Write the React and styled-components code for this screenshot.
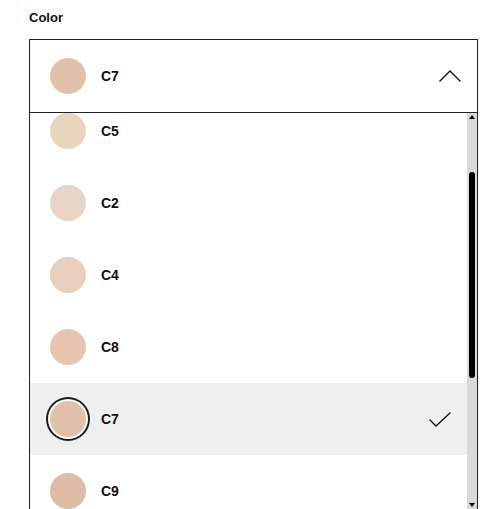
import React from "react";
import styled, { createGlobalStyle } from "styled-components";

const Global = createGlobalStyle`
  html, body { margin: 0; padding: 0; background: #fff; }
  body { font-family: "Liberation Sans", Arial, sans-serif; color: #111; overflow: hidden; }
`;

const Page = styled.div`
  padding: 10px 25px 0 29px;
  width: 503px;
  box-sizing: border-box;
`;

const Label = styled.div`
  font-size: 13px;
  font-weight: 700;
  line-height: 15px;
  color: #111;
  margin-bottom: 14px;
`;

const Select = styled.div`
  width: 449px;
  box-sizing: border-box;
  border: 1px solid #222;
`;

const Header = styled.div`
  height: 72px;
  display: flex;
  align-items: center;
  padding: 0 16px 0 20px;
  border-bottom: 1px solid #222;
`;

const Swatch = styled.span`
  width: 36px;
  height: 36px;
  border-radius: 50%;
  flex: none;
  background: ${(p) => p.$color};
  box-shadow: ${(p) => (p.$ring ? "0 0 0 2px #fff, 0 0 0 4px #1c1c1c" : "none")};
`;

const Name = styled.span`
  margin-left: 15px;
  font-size: 14px;
  font-weight: 700;
  color: #111;
  flex: 1;
`;

const Body = styled.div`
  display: flex;
  height: 396px;
`;

const ListViewport = styled.div`
  flex: 1;
  overflow: hidden;
`;

const List = styled.ul`
  list-style: none;
  margin: -18px 0 0;
  padding: 0;
`;

const Row = styled.li`
  height: 72px;
  display: flex;
  align-items: center;
  padding: 0 16px 0 20px;
  background: ${(p) => (p.$selected ? "#efefef" : "transparent")};
`;

const Scrollbar = styled.div`
  width: 10px;
  flex: none;
  background: #dadada;
  display: flex;
  flex-direction: column;
  align-items: center;
`;

const Arrow = styled.span`
  width: 0;
  height: 0;
  border-left: 3px solid transparent;
  border-right: 3px solid transparent;
  ${(p) =>
    p.$down
      ? "border-top: 4px solid #000; margin-bottom: 2px;"
      : "border-bottom: 4px solid #000; margin-top: 2px;"}
`;

const Spacer = styled.span`
  flex: ${(p) => (p.$grow ? 1 : "none")};
  height: ${(p) => p.$h || 0}px;
`;

const Thumb = styled.span`
  width: 6px;
  height: 206px;
  background: #000;
  border-radius: 3px;
`;

const ChevronUp = () => (
  <svg width="22" height="12" viewBox="0 0 22 12" fill="none">
    <path d="M0.5 11.5L11 1L21.5 11.5" stroke="#111" strokeWidth="1.3" />
  </svg>
);

const Check = () => (
  <svg width="22" height="15" viewBox="0 0 22 15" fill="none">
    <path d="M0.5 7.5L7 14L21.5 0.5" stroke="#111" strokeWidth="1.3" />
  </svg>
);

const options = [
  { name: "C5", color: "#e9d4be" },
  { name: "C2", color: "#e9d5c5" },
  { name: "C4", color: "#e8cfbe" },
  { name: "C8", color: "#e8c6ae" },
  { name: "C7", color: "#e1c1aa" },
  { name: "C9", color: "#dfbca4" },
];

export default function App() {
  const selected = "C7";
  const sel = options.find((o) => o.name === selected);
  return (
    <>
      <Global />
      <Page>
        <Label>Color</Label>
        <Select>
          <Header>
            <Swatch $color={sel.color} />
            <Name>{sel.name}</Name>
            <ChevronUp />
          </Header>
          <Body>
            <ListViewport>
              <List>
                {options.map((o) => (
                  <Row key={o.name} $selected={o.name === selected}>
                    <Swatch $color={o.color} $ring={o.name === selected} />
                    <Name>{o.name}</Name>
                    {o.name === selected && <Check />}
                  </Row>
                ))}
              </List>
            </ListViewport>
            <Scrollbar>
              <Arrow />
              <Spacer $h={53} />
              <Thumb />
              <Spacer $grow />
              <Arrow $down />
            </Scrollbar>
          </Body>
        </Select>
      </Page>
    </>
  );
}
